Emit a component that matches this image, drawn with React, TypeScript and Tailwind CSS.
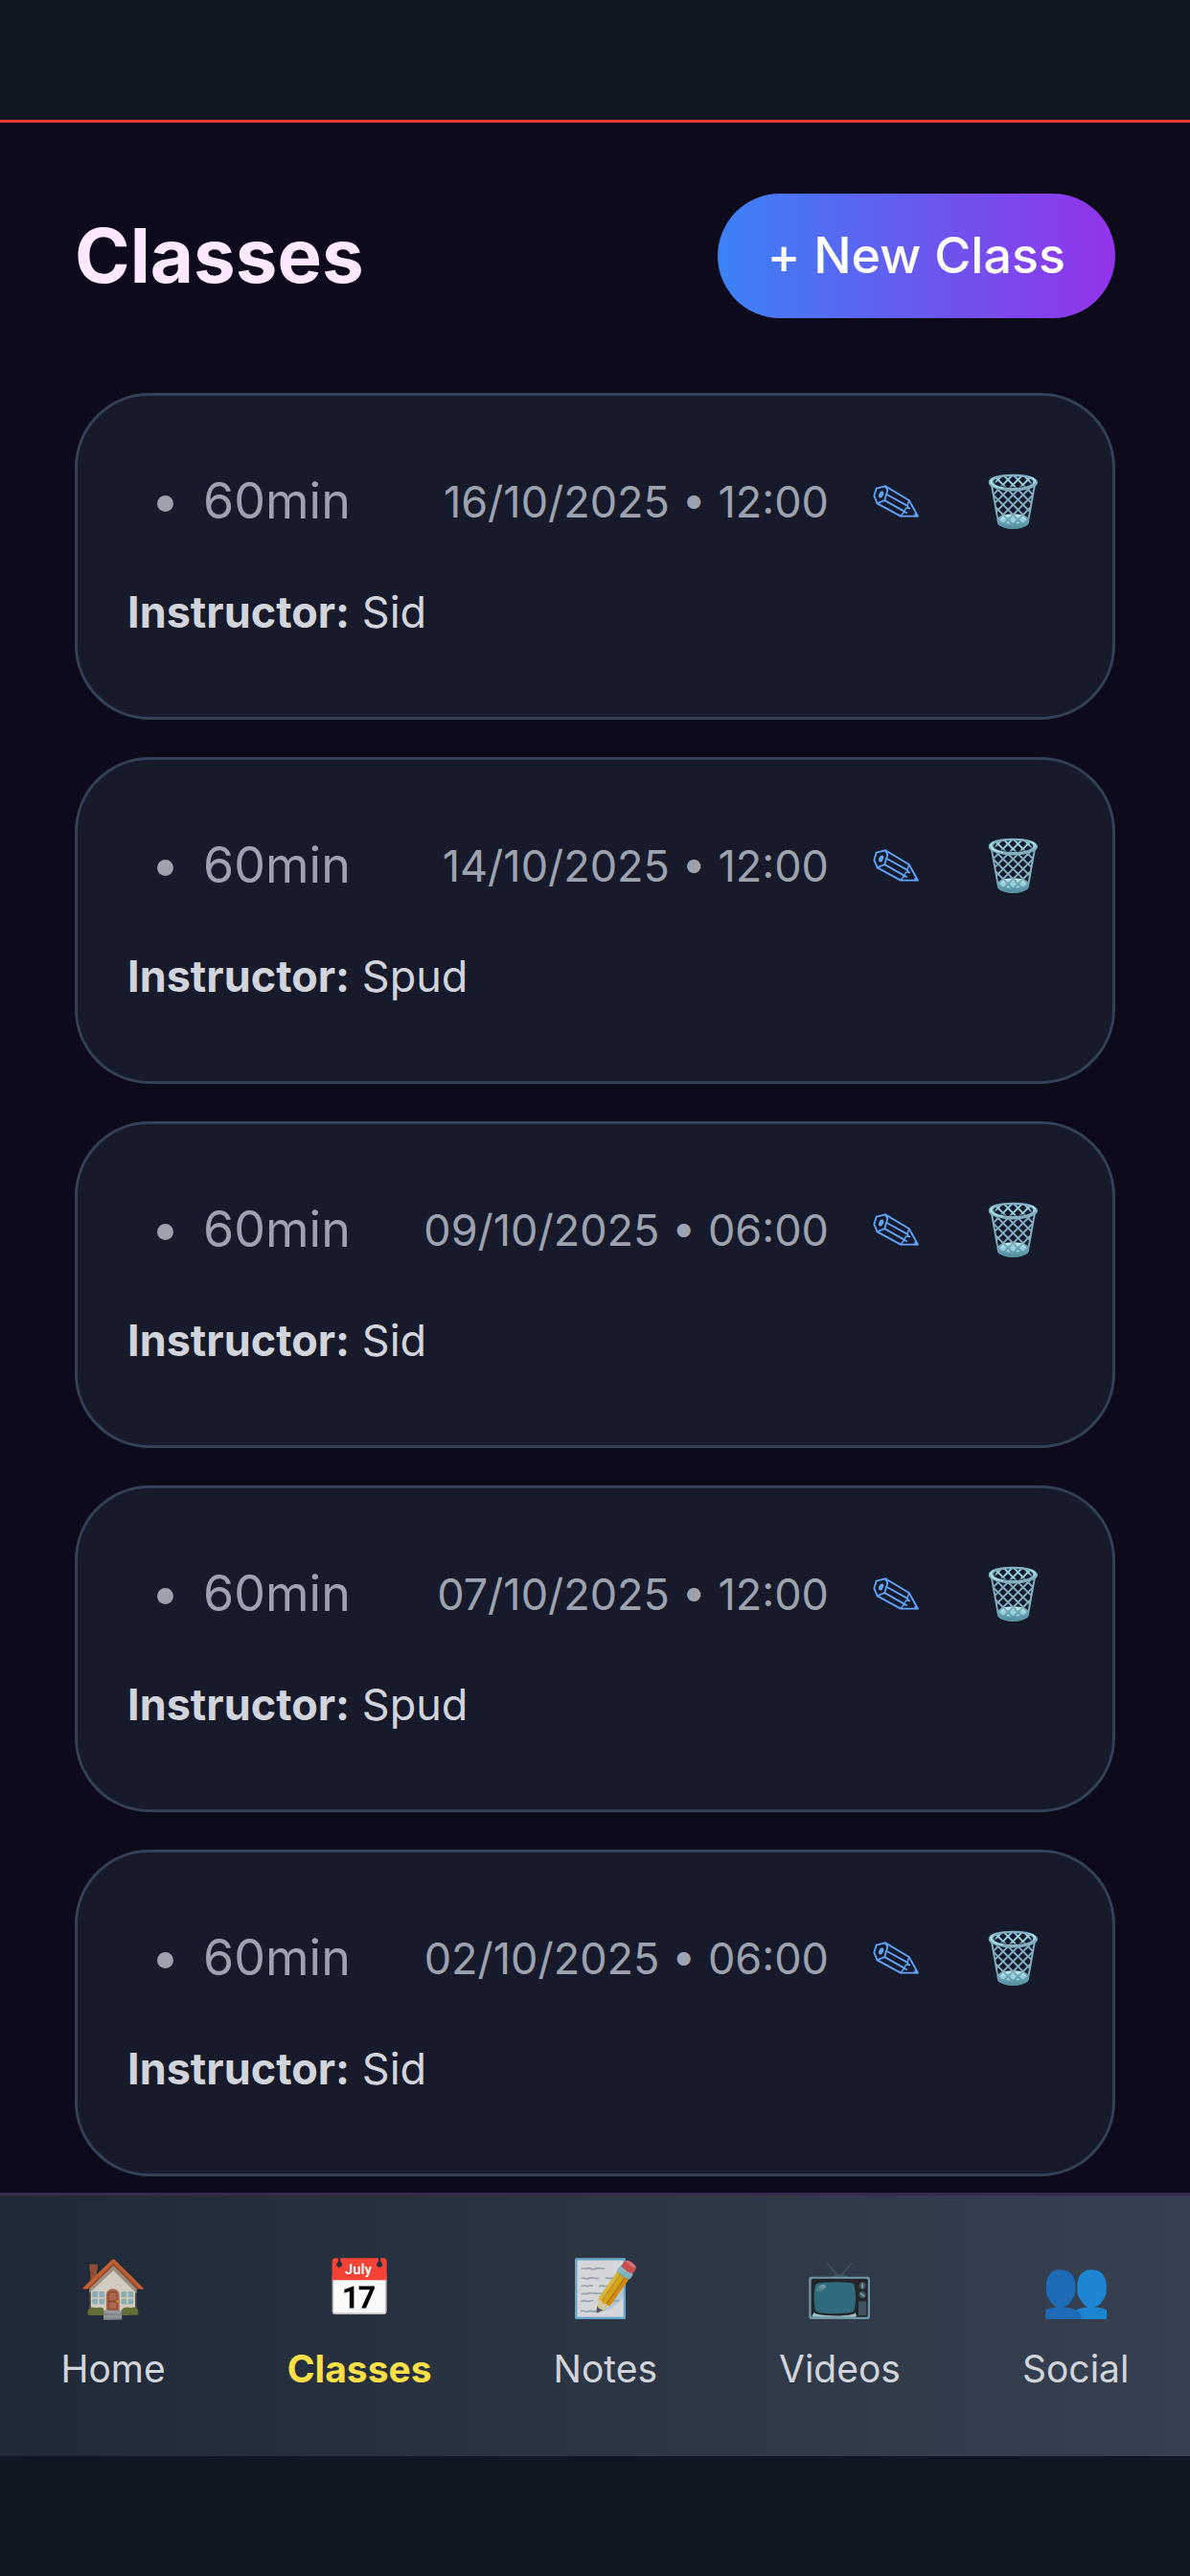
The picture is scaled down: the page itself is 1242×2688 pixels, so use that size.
const classes = [
  { date: "16/10/2025", time: "12:00", instructor: "Sid" },
  { date: "14/10/2025", time: "12:00", instructor: "Spud" },
  { date: "09/10/2025", time: "06:00", instructor: "Sid" },
  { date: "07/10/2025", time: "12:00", instructor: "Spud" },
  { date: "02/10/2025", time: "06:00", instructor: "Sid" },
];

const tabs = [
  { icon: "🏠", label: "Home" },
  { icon: "📅", label: "Classes", active: true },
  { icon: "📝", label: "Notes" },
  { icon: "📺", label: "Videos" },
  { icon: "👥", label: "Social" },
];

function PencilIcon() {
  return (
    <svg
      viewBox="65 110 144 102"
      className="h-[34px] w-[48px]"
      fill="none"
      stroke="currentColor"
      strokeWidth="5.5"
      strokeLinejoin="round"
      strokeLinecap="round"
      aria-hidden="true"
    >
      <path d="M104 114 L178 158 L206 208 L152 208 L79 168 L69 144 L76 121 Z" />
      <path d="M104 114 L111 127 L102 158 L79 168" />
      <path d="M109 140 L172 175" />
      <path d="M103 159 L162 192" />
      <path d="M178 158 L173 176 L181 184 L169 182 L163 192 L172 197 L161 196 L152 208" strokeWidth="4" />
      <ellipse cx="91" cy="140" rx="7" ry="11" transform="rotate(22 91 140)" fill="currentColor" stroke="none" />
      <path d="M199 198 L206 208 L195 208 Z" fill="currentColor" strokeWidth="2" />
    </svg>
  );
}

export default function App() {
  return (
    <div className="flex h-screen flex-col bg-[#101722] font-['Inter',sans-serif]">
      <div className="h-[125px] shrink-0" />
      <main className="min-h-0 flex-1 overflow-hidden border-t-[3px] border-[#e93a37] bg-[#0d0a1c] px-[78px] pt-[74px]">
        <header className="flex items-center justify-between">
          <h1 className="text-[78px] leading-[104px] font-bold text-[#fde8ff]">Classes</h1>
          <button className="rounded-full bg-linear-to-r/srgb from-[#3b82f6] to-[#9333ea] px-[52px] py-[26px] text-[52px] leading-[78px] font-medium text-white [font-feature-settings:'calt'_0]">
            + New Class
          </button>
        </header>
        <section className="mt-[78px] flex flex-col gap-[39px]">
          {classes.map((c) => (
            <article
              key={c.date}
              className="rounded-[78px] border-[3px] border-[#334155] bg-[#171a2b] px-[52px] pt-[53px] pb-[77px]"
            >
              <div className="flex h-[114px] items-center gap-[18px]">
                <div className="flex flex-1 items-center gap-[31px] pl-[31px] text-[52px] leading-[78px] text-[#9ca3af]">
                  <span className="mt-1 size-[17px] rounded-full bg-[#9ca3af]" />
                  <span>60min</span>
                </div>
                <span className="text-[45px] leading-[65px] text-[#9ca3af]">
                  {c.date} • {c.time}
                </span>
                <button aria-label="Edit class" className="flex w-[104px] justify-center text-[#60a5fa]">
                  <PencilIcon />
                </button>
                <button aria-label="Delete class" className="flex w-[104px] justify-center text-[52px] leading-[78px]">
                  🗑️
                </button>
              </div>
              <p className="mt-[26px] text-[45px] leading-[65px] text-[#d1d5db]">
                <strong className="font-bold">Instructor:</strong> {c.instructor}
              </p>
            </article>
          ))}
        </section>
      </main>
      <nav className="flex h-[275px] shrink-0 items-start justify-around border-t-[3px] border-[#3b2a50] bg-linear-to-r/srgb from-[#1f2937] to-[#374151] pt-[63px]">
        {tabs.map((t) => (
          <a key={t.label} href="#" className="flex flex-col items-center gap-[26px]">
            <span className={t.active ? "text-[58px] leading-[66px]" : "text-[58px] leading-[66px] opacity-80"}>{t.icon}</span>
            <span
              className={
                t.active
                  ? "text-[39px] leading-[52px] font-bold text-[#fde047]"
                  : "text-[39px] leading-[52px] text-[#d1d5db]"
              }
            >
              {t.label}
            </span>
          </a>
        ))}
      </nav>
      <div className="h-[125px] shrink-0" />
    </div>
  );
}
